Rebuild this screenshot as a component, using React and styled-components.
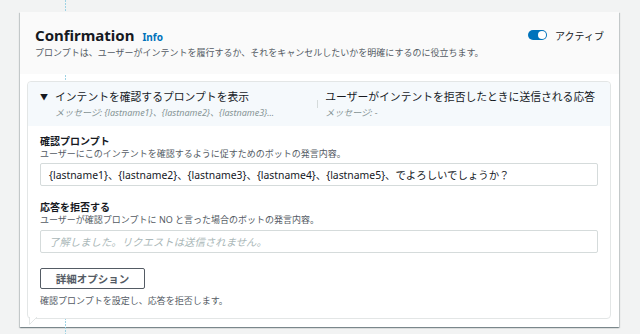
import styled, { createGlobalStyle } from "styled-components";

const GlobalStyle = createGlobalStyle`
  html, body {
    margin: 0;
    padding: 0;
    background: #f2f3f3;
  }
  body {
    font-family: "Noto Sans", "Noto Sans CJK JP", sans-serif;
    color: #16191f;
  }
`;

const Page = styled.div`
  position: relative;
  width: 640px;
  height: 334px;
  padding: 12px 21px 0 20px;
  box-sizing: border-box;
  overflow: hidden;
`;

const Connector = styled.div`
  position: absolute;
  left: 65px;
  top: 0;
  bottom: 0;
  width: 1px;
  z-index: 1;
  background: repeating-linear-gradient(to bottom, #9fd3e4 0 2px, transparent 2px 3px);
`;

const Card = styled.section`
  background: #fff;
  box-shadow: 0 1px 1px 0 rgba(0, 28, 36, 0.3), 1px 1px 1px 0 rgba(0, 28, 36, 0.15),
    -1px 1px 1px 0 rgba(0, 28, 36, 0.15);
  padding-bottom: 8px;
`;

const Header = styled.header`
  position: relative;
  z-index: 2;
  background: #fafafa;
  padding: 14px 15px 15px 15px;
`;

const HeaderRow = styled.div`
  display: flex;
  align-items: center;
  justify-content: space-between;
`;

const Title = styled.h2`
  margin: 0;
  font-size: 15px;
  line-height: 18px;
  font-weight: 700;
  display: flex;
  align-items: baseline;
  gap: 8px;
`;

const InfoLink = styled.span`
  font-size: 10px;
  font-weight: 700;
  color: #0073bb;
`;

const Description = styled.p`
  margin: ${(p) => p.$mt || 0}px 0 0 0;
  font-size: 9px;
  line-height: 12px;
  color: #545b64;
`;

const Toggle = styled.label`
  display: flex;
  align-items: center;
  gap: 8px;
  font-size: 10px;
  color: #16191f;
  margin-top: -2px;
`;

const Switch = styled.span`
  position: relative;
  width: 19px;
  height: 10px;
  border-radius: 5px;
  background: #0073bb;
  &::after {
    content: "";
    position: absolute;
    right: 1px;
    top: 1px;
    width: 8px;
    height: 8px;
    border-radius: 50%;
    background: #fff;
  }
`;

const Body = styled.div`
  padding: 7px 8px 0 7px;
`;

const Panel = styled.div`
  position: relative;
  z-index: 2;
  background: #fff;
  border: 1px solid #e3e6e6;
  border-radius: 4px;
`;

const Tail = styled.svg`
  position: absolute;
  left: 1px;
  bottom: -7px;
`;

const Tabs = styled.div`
  display: flex;
  background: #f5f9fc;
  border-radius: 4px 4px 0 0;
  padding: 8px 15px 7px 12px;
`;

const Tab = styled.div`
  position: relative;
  display: flex;
  gap: 7px;
  flex: ${(p) => (p.$grow ? 1 : "none")};
  padding-left: ${(p) => (p.$divider ? 8 : 0)}px;
  ${(p) =>
    p.$divider &&
    `&::before {
      content: "";
      position: absolute;
      left: 0;
      top: 10px;
      height: 8px;
      border-left: 1px solid #d5dbdb;
    }`}
`;

const Caret = styled.span`
  font-size: 8px;
  line-height: 14px;
  color: #16191f;
`;

const TabTitle = styled.div`
  font-size: 10.8px;
  line-height: 14px;
  font-weight: 400;
`;

const TabSub = styled.div`
  margin-top: 2px;
  font-size: 9px;
  line-height: 13px;
  font-style: italic;
  color: #879596;
`;

const Content = styled.div`
  padding: 9px 12px 11px 12px;
`;

const Field = styled.div`
  & + & {
    margin-top: 15px;
  }
`;

const Label = styled.div`
  font-size: 10px;
  line-height: 13px;
  font-weight: 700;
`;

const Input = styled.div`
  margin-top: ${(p) => (p.$placeholder ? 4 : 3)}px;
  height: 23px;
  box-sizing: border-box;
  border: 1px solid #d5dbdb;
  border-radius: 2px;
  padding: 0 8px;
  display: flex;
  align-items: center;
  font-size: 10.4px;
  color: ${(p) => (p.$placeholder ? "#aab7b8" : "#16191f")};
  font-style: ${(p) => (p.$placeholder ? "italic" : "normal")};
`;

const Button = styled.button`
  margin-top: 15px;
  width: 105px;
  height: 21px;
  border: 1px solid #545b64;
  border-radius: 2px;
  background: #fff;
  font-family: inherit;
  font-size: 10.5px;
  font-weight: 700;
  color: #545b64;
  padding: 0;
`;

export default function App() {
  return (
    <>
      <GlobalStyle />
      <Page>
        <Connector />
        <Card>
          <Header>
            <HeaderRow>
              <Title>
                Confirmation <InfoLink>Info</InfoLink>
              </Title>
              <Toggle>
                <Switch />
                アクティブ
              </Toggle>
            </HeaderRow>
            <Description $mt={1}>
              プロンプトは、ユーザーがインテントを履行するか、それをキャンセルしたいかを明確にするのに役立ちます。
            </Description>
          </Header>
          <Body>
            <Panel>
              <Tabs>
                <Tab $grow>
                  <Caret>▼</Caret>
                  <div>
                    <TabTitle>インテントを確認するプロンプトを表示</TabTitle>
                    <TabSub>メッセージ: {"{lastname1}、{lastname2}、{lastname3}..."}</TabSub>
                  </div>
                </Tab>
                <Tab $divider>
                  <div>
                    <TabTitle>ユーザーがインテントを拒否したときに送信される応答</TabTitle>
                    <TabSub>メッセージ: -</TabSub>
                  </div>
                </Tab>
              </Tabs>
              <Content>
                <Field>
                  <Label>確認プロンプト</Label>
                  <Description>ユーザーにこのインテントを確認するように促すためのボットの発言内容。</Description>
                  <Input>
                    {"{lastname1}、{lastname2}、{lastname3}、{lastname4}、{lastname5}、でよろしいでしょうか？"}
                  </Input>
                </Field>
                <Field>
                  <Label>応答を拒否する</Label>
                  <Description>ユーザーが確認プロンプトに NO と言った場合のボットの発言内容。</Description>
                  <Input $placeholder>了解しました。リクエストは送信されません。</Input>
                </Field>
                <Button>詳細オプション</Button>
                <Description $mt={6}>確認プロンプトを設定し、応答を拒否します。</Description>
              </Content>
              <Tail width="9" height="8" viewBox="0 0 9 8">
                <path d="M0.5 0 L0.5 7.5 L8 0" fill="#fff" stroke="#e3e6e6" strokeWidth="1" />
              </Tail>
            </Panel>
          </Body>
        </Card>
      </Page>
    </>
  );
}
